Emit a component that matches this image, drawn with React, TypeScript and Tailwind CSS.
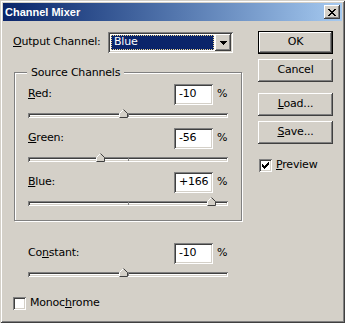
import React from 'react';

const raised =
  'shadow-[inset_-1px_-1px_#404040,inset_1px_1px_#ffffff,inset_-2px_-2px_#808080,inset_2px_2px_#d4d0c8]';
const sunken =
  'shadow-[inset_1px_1px_#808080,inset_-1px_-1px_#ffffff,inset_2px_2px_#404040,inset_-2px_-2px_#d4d0c8]';

function Button({ children, isDefault }: { children: React.ReactNode; isDefault?: boolean }) {
  return (
    <div
      className={`w-[75px] h-[23px] flex items-center justify-center bg-[#d4d0c8] ${
        isDefault
          ? 'shadow-[inset_0_0_0_1px_#000000,inset_-2px_-2px_#404040,inset_2px_2px_#ffffff,inset_-3px_-3px_#808080,inset_3px_3px_#d4d0c8]'
          : raised
      }`}
    >
      {children}
    </div>
  );
}

function Checkbox({ checked }: { checked?: boolean }) {
  return (
    <div className={`w-[13px] h-[13px] bg-white shrink-0 ${sunken}`}>
      {checked && (
        <svg width="13" height="13" viewBox="0 0 13 13" shapeRendering="crispEdges">
          <path d="M3 5h1v3h-1zM4 6h1v3h-1zM5 7h1v3h-1zM6 6h1v3h-1zM7 5h1v3h-1zM8 4h1v3h-1zM9 3h1v3h-1z" fill="#000" />
        </svg>
      )}
    </div>
  );
}

function Slider({ value }: { value: number }) {
  const center = 100 + value / 2;
  return (
    <div className={`relative w-[200px] h-[5px] bg-[#ffffff] ${sunken}`}>
      <div className="absolute left-[100px] top-[1px] h-[3px] w-px bg-[#808080]" />
      <svg
        className="absolute top-[-4px]"
        style={{ left: center - 4.5 }}
        width="9"
        height="9"
        viewBox="0 0 9 9"
      >
        <polygon points="4.5,0.5 8.5,4.5 8.5,8.5 0.5,8.5 0.5,4.5" fill="#d4d0c8" />
        <polyline points="0.5,8 0.5,4.5 4.5,0.5" fill="none" stroke="#ffffff" />
        <polyline points="4.5,0.5 8.5,4.5 8.5,8.5 0.5,8.5" fill="none" stroke="#404040" />
      </svg>
    </div>
  );
}

function ValueRow({ label, value, slider }: { label: React.ReactNode; value: string; slider: number }) {
  return (
    <div className="flex flex-col w-[200px]">
      <div className="flex items-center h-[21px]">
        <span className="flex-1">{label}</span>
        <div className={`w-[39px] h-[21px] bg-white flex items-center pl-[5px] ${sunken}`}>{value}</div>
        <span className="ml-[4px] w-[11px]">%</span>
      </div>
      <div className="mt-[8px]">
        <Slider value={slider} />
      </div>
    </div>
  );
}

export default function App() {
  return (
    <div
      className="w-[345px] h-[323px] bg-[#d4d0c8] p-[3px] flex flex-col text-black text-[11px] tracking-[-0.2px] shadow-[inset_1px_1px_#d4d0c8,inset_-1px_-1px_#404040,inset_2px_2px_#ffffff,inset_-2px_-2px_#808080]"
      style={{ fontFamily: '"DejaVu Sans", sans-serif' }}
    >
      {/* Title bar */}
      <div className="h-[18px] flex items-center justify-between bg-linear-to-r from-[#0a246a] to-[#a6caf0] pl-[2px] pr-[2px]">
        <span
          className="text-white font-bold text-[11px] tracking-normal"
          style={{ fontFamily: '"Liberation Sans", Arial, sans-serif' }}
        >
          Channel Mixer
        </span>
        <div className={`w-[16px] h-[14px] bg-[#d4d0c8] flex items-center justify-center ${raised}`}>
          <svg width="8" height="7" viewBox="0 0 8 7" shapeRendering="crispEdges">
            <path
              d="M0 0h2v1h-2zM6 0h2v1h-2zM1 1h2v1h-2zM5 1h2v1h-2zM2 2h4v1h-4zM3 3h2v1h-2zM2 4h4v1h-4zM1 5h2v1h-2zM5 5h2v1h-2zM0 6h2v1h-2zM6 6h2v1h-2z"
              fill="#000"
            />
          </svg>
        </div>
      </div>

      <div className="flex flex-1">
        {/* Left column */}
        <div className="w-[255px] pl-[10px] pt-[11px] flex flex-col">
          <div className="flex items-center h-[21px]">
            <span className="w-[95px]">
              <u>O</u>utput Channel:
            </span>
            <div className={`w-[125px] h-[21px] bg-white p-[2px] flex ${sunken}`}>
              <div className="flex-1 m-[1px] bg-[#0a246a] border border-dotted border-[#f0d890] text-white flex items-center pl-[2px]">
                Blue
              </div>
              <div className={`w-[16px] h-[17px] bg-[#d4d0c8] flex items-center justify-center ${raised}`}>
                <svg width="7" height="4" viewBox="0 0 7 4" shapeRendering="crispEdges">
                  <path d="M0 0h7v1h-7zM1 1h5v1h-5zM2 2h3v1h-3zM3 3h1v1h-1z" fill="#000" />
                </svg>
              </div>
            </div>
          </div>

          {/* Source channels group */}
          <div className="relative ml-[1px] mt-[19px] w-[228px] h-[149px] border border-[#808080] shadow-[inset_1px_1px_#ffffff,1px_1px_#ffffff] pl-[13px] pt-[11px] flex flex-col gap-[10px]">
            <span className="absolute left-[12px] top-[-7px] bg-[#d4d0c8] px-[4px] leading-[13px]">Source Channels</span>
            <ValueRow label={<><u>R</u>ed:</>} value="-10" slider={-10} />
            <ValueRow label={<><u>G</u>reen:</>} value="-56" slider={-56} />
            <ValueRow label={<><u>B</u>lue:</>} value="+166" slider={166} />
          </div>

          <div className="ml-[15px] mt-[22px]">
            <ValueRow label={<>Co<u>n</u>stant:</>} value="-10" slider={-10} />
          </div>

          <div className="flex items-center mt-[18px] gap-[4px]">
            <Checkbox />
            <span>
              Monoc<u>h</u>rome
            </span>
          </div>
        </div>

        {/* Right column */}
        <div className="pt-[10px] flex flex-col">
          <Button isDefault>OK</Button>
          <div className="mt-[5px]">
            <Button>Cancel</Button>
          </div>
          <div className="mt-[11px]">
            <Button>
              <span>
                <u>L</u>oad...
              </span>
            </Button>
          </div>
          <div className="mt-[5px]">
            <Button>
              <span>
                <u>S</u>ave...
              </span>
            </Button>
          </div>
          <div className="flex items-center mt-[13px] ml-[1px] gap-[4px]">
            <Checkbox checked />
            <span>
              <u>P</u>review
            </span>
          </div>
        </div>
      </div>
    </div>
  );
}
